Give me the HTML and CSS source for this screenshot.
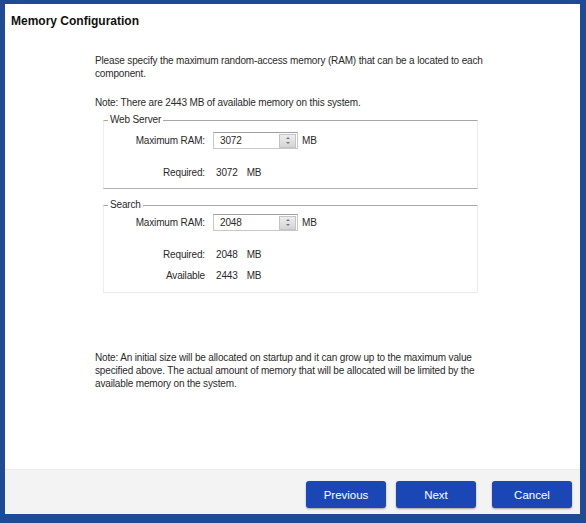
FILE: index.html
```html
<!DOCTYPE html>
<html>
<head>
<meta charset="utf-8">
<link rel="stylesheet" href="styles.css">
</head>
<body>
<div class="window">
  <div class="main">
    <h1 class="title">Memory Configuration</h1>
    <div class="content">
      <p class="intro">Please specify the maximum random-access memory (RAM) that can be a located to each component.</p>
      <p class="avail">Note: There are 2443 MB of available memory on this system.</p>
      <fieldset class="group group-web">
        <legend>Web Server</legend>
        <div class="row row-input">
          <span class="label">Maximum RAM:</span>
          <div class="spin">
            <span class="spin-value">3072</span>
            <span class="spin-btn"><span class="up"></span><span class="down"></span></span>
          </div>
          <span class="unit">MB</span>
        </div>
        <div class="row row-info">
          <span class="label">Required:</span>
          <span class="value">3072</span>
          <span class="unit2">MB</span>
        </div>
      </fieldset>
      <fieldset class="group group-search">
        <legend>Search</legend>
        <div class="row row-input">
          <span class="label">Maximum RAM:</span>
          <div class="spin">
            <span class="spin-value">2048</span>
            <span class="spin-btn"><span class="up"></span><span class="down"></span></span>
          </div>
          <span class="unit">MB</span>
        </div>
        <div class="row row-info">
          <span class="label">Required:</span>
          <span class="value">2048</span>
          <span class="unit2">MB</span>
        </div>
        <div class="row row-info2">
          <span class="label">Available</span>
          <span class="value">2443</span>
          <span class="unit2">MB</span>
        </div>
      </fieldset>
      <p class="note">Note: An initial size will be allocated on startup and it can grow up to the maximum value specified above. The actual amount of memory that will be allocated will be limited by the available memory on the system.</p>
    </div>
  </div>
  <div class="footer">
    <button class="btn">Previous</button>
    <button class="btn">Next</button>
    <button class="btn btn-cancel">Cancel</button>
  </div>
</div>
</body>
</html>
```
FILE: styles.css
```css
html, body {
  margin: 0;
  padding: 0;
  height: 100%;
}
body {
  background: #1f4b96;
  font-family: "Liberation Sans", Arial, sans-serif;
  color: #2a2a2a;
  padding: 4px 6px 9px 5px;
  box-sizing: border-box;
}
.window {
  background: #fff;
  height: 100%;
  display: flex;
  flex-direction: column;
}
.main {
  flex: 1;
  display: flex;
  flex-direction: column;
}
.title {
  margin: 0;
  padding: 10px 0 0 6px;
  font-size: 12px;
  font-weight: bold;
  color: #111;
  line-height: 15px;
}
.content {
  margin-left: 90px;
  width: 394px;
  font-size: 10px;
  line-height: 13px;
  letter-spacing: -0.15px;
}
.intro {
  margin: 25px 0 0;
}
.avail {
  margin: 16px 0 0;
}
.group {
  margin: 5px 0 0 8px;
  width: 375px;
  box-sizing: border-box;
  border: 1px solid #ececec;
  border-top: 1px solid #a8a8a8;
  padding: 0;
}
.group-web {
  border-bottom-color: #b0b0b0;
  height: 75px;
}
.group-search {
  margin-top: 10px;
  height: 94px;
}
.group legend {
  padding: 0 2px;
  margin-left: 4px;
  line-height: 12px;
}
.row {
  display: grid;
  grid-template-columns: 101px auto auto;
  align-items: center;
  justify-content: start;
}
.label {
  text-align: right;
}
.row-input {
  margin-top: 6px;
}
.group-search .row-input {
  margin-top: 3px;
}
.spin {
  margin-left: 8px;
  width: 85px;
  height: 17px;
  border: 1px solid #c8c8c8;
  border-top-color: #a0a0a0;
  display: flex;
  align-items: center;
  box-sizing: border-box;
}
.spin-value {
  flex: 1;
  padding-left: 6px;
}
.spin-btn {
  width: 17px;
  height: 14px;
  margin-right: 1px;
  background: linear-gradient(#eeeeee, #d4d4d4);
  border: 1px solid #c4c4c4;
  display: flex;
  flex-direction: column;
  align-items: center;
  justify-content: center;
  gap: 3px;
  box-sizing: border-box;
}
.up, .down {
  width: 0;
  height: 0;
  border-left: 2px solid transparent;
  border-right: 2px solid transparent;
}
.up { border-bottom: 2px solid #777; }
.down { border-top: 2px solid #777; }
.unit {
  margin-left: 4px;
}
.value {
  margin-left: 11px;
}
.unit2 {
  margin-left: 9px;
}
.row-info {
  margin-top: 17px;
}
.group-search .row-info {
  margin-top: 17px;
}
.row-info2 {
  margin-top: 8px;
}
.note {
  margin: 58px 0 0;
}
.footer {
  height: 45px;
  background: #f3f3f3;
  border-top: 1px solid #ececec;
  box-sizing: border-box;
  display: flex;
  justify-content: flex-end;
  align-items: flex-start;
  gap: 10px;
  padding: 11px 8px 0 0;
}
.btn {
  width: 80px;
  height: 27px;
  border: none;
  border-radius: 3px;
  background: #1b47b6;
  color: #fff;
  font-family: "Liberation Sans", Arial, sans-serif;
  font-size: 11.5px;
  box-shadow: 0 1px 2px rgba(0,0,0,0.35);
  padding: 0;
}
.btn-cancel {
  margin-left: 6px;
}
```
